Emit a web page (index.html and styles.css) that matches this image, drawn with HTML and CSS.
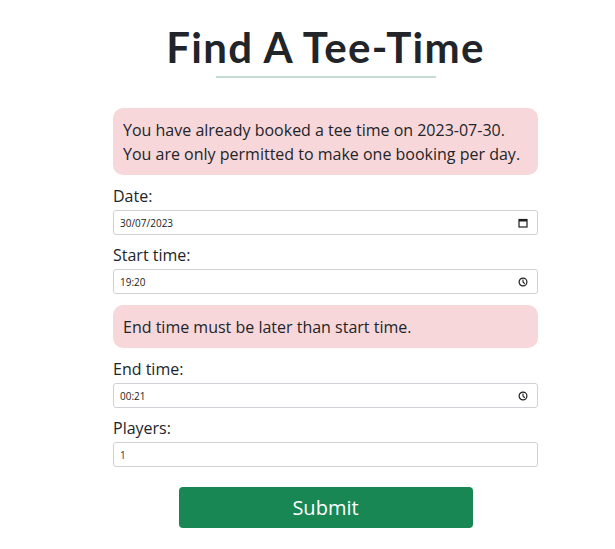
FILE: index.html
```html
<!DOCTYPE html>
<html lang="en-GB">
<head>
<meta charset="utf-8">
<title>Find A Tee-Time</title>
<link rel="stylesheet" href="styles.css">
</head>
<body>
<main class="page">
  <h1 class="title">Find A Tee-Time</h1>
  <div class="rule"></div>
  <form class="form">
    <div class="alert alert-first">You have already booked a tee time on 2023-07-30. You are only permitted to make one booking per day.</div>
    <div class="field">
      <label class="label" for="date">Date:</label>
      <div class="input-box">
        <input class="input" id="date" type="text" value="30/07/2023">
        <svg class="icon" width="10" height="10" viewBox="0 0 10 10" aria-hidden="true">
          <rect x="1" y="1.5" width="8" height="7.5" fill="none" stroke="#1f1f1f" stroke-width="1.2"/>
          <rect x="1" y="1.5" width="8" height="2" fill="#1f1f1f"/>
        </svg>
      </div>
    </div>
    <div class="field">
      <label class="label" for="start">Start time:</label>
      <div class="input-box">
        <input class="input" id="start" type="text" value="19:20">
        <svg class="icon" width="10" height="10" viewBox="0 0 10 10" aria-hidden="true">
          <circle cx="5" cy="5" r="3.9" fill="none" stroke="#1f1f1f" stroke-width="1.2"/>
          <path d="M5 2.6V5L6.8 6.8" fill="none" stroke="#1f1f1f" stroke-width="1.1"/>
        </svg>
      </div>
    </div>
    <div class="alert alert-inline">End time must be later than start time.</div>
    <div class="field">
      <label class="label" for="end">End time:</label>
      <div class="input-box">
        <input class="input" id="end" type="text" value="00:21">
        <svg class="icon" width="10" height="10" viewBox="0 0 10 10" aria-hidden="true">
          <circle cx="5" cy="5" r="3.9" fill="none" stroke="#1f1f1f" stroke-width="1.2"/>
          <path d="M5 2.6V5L6.8 6.8" fill="none" stroke="#1f1f1f" stroke-width="1.1"/>
        </svg>
      </div>
    </div>
    <div class="field">
      <label class="label" for="players">Players:</label>
      <div class="input-box">
        <input class="input input-num" id="players" type="text" value="1">
      </div>
    </div>
    <div class="actions">
      <button class="submit" type="button">Submit</button>
    </div>
  </form>
</main>
</body>
</html>
```

FILE: styles.css
```css
* { box-sizing: border-box; }
html, body { margin: 0; padding: 0; background: #fff; }
body {
  font-family: "Open Sans", "Liberation Sans", sans-serif;
  color: #212529;
}
.page {
  width: 425px;
  margin-left: 113px;
  padding-top: 22px;
  display: flex;
  flex-direction: column;
  align-items: center;
}
.title {
  margin: 0;
  font-family: "Lato", "Open Sans", sans-serif;
  font-weight: 700;
  font-size: 42px;
  line-height: 50px;
  color: #212529;
  letter-spacing: 1.3px;
}
.rule {
  width: 220px;
  height: 2px;
  background: #c5ddd2;
  margin-top: 4px;
}
.form {
  width: 100%;
  margin-top: 30px;
  display: flex;
  flex-direction: column;
}
.alert {
  background: #f8d7da;
  border-radius: 10px;
  padding: 10px 10px 9px;
  font-size: 16px;
  line-height: 24px;
  color: #212529;
  margin-bottom: 9px;
}
.alert-inline { margin-top: 3px; }
.field {
  display: flex;
  flex-direction: column;
  margin-bottom: 8px;
}
.label {
  font-size: 16px;
  line-height: 24px;
  margin-bottom: 2px;
}
.input-box {
  height: 25px;
  border: 1px solid #ced1d6;
  border-radius: 3px;
  background: #fff;
  display: flex;
  align-items: center;
  padding: 0 9px 0 6px;
}
.input {
  flex: 1;
  min-width: 0;
  height: 100%;
  border: none;
  outline: none;
  padding: 0;
  background: transparent;
  font-family: "Open Sans", "Liberation Sans", sans-serif;
  font-size: 10px;
  color: #222;
}
.input-num { color: #333; }
.icon { flex: none; display: block; }
.actions {
  display: flex;
  justify-content: center;
  margin-top: 12px;
}
.submit {
  width: 294px;
  height: 41px;
  border: none;
  border-radius: 4px;
  background: #198754;
  color: #fff;
  font-family: "Open Sans", sans-serif;
  font-size: 20px;
}
```
